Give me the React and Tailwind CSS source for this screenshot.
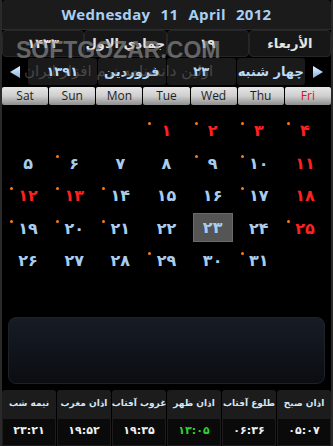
const days = [
  [null, null, null, { n: "۱", red: true, dot: true }, { n: "۲", red: true, dot: true }, { n: "۳", red: true, dot: true }, { n: "۴", red: true, dot: true }],
  [{ n: "۵" }, { n: "۶", dot: true }, { n: "۷" }, { n: "۸" }, { n: "۹", dot: true }, { n: "۱۰", dot: true }, { n: "۱۱", red: true }],
  [{ n: "۱۲", red: true, dot: true }, { n: "۱۳", red: true, dot: true }, { n: "۱۴", dot: true }, { n: "۱۵" }, { n: "۱۶" }, { n: "۱۷", dot: true }, { n: "۱۸", red: true }],
  [{ n: "۱۹", dot: true }, { n: "۲۰", dot: true }, { n: "۲۱", dot: true }, { n: "۲۲" }, { n: "۲۳", sel: true }, { n: "۲۴" }, { n: "۲۵", red: true, dot: true }],
  [{ n: "۲۶" }, { n: "۲۷" }, { n: "۲۸" }, { n: "۲۹", dot: true }, { n: "۳۰" }, { n: "۳۱", dot: true }, null],
];

const weekdays = ["Sat", "Sun", "Mon", "Tue", "Wed", "Thu", "Fri"];

const prayers = [
  { label: "نیمه شب", time: "۲۳:۲۱" },
  { label: "اذان مغرب", time: "۱۹:۵۲" },
  { label: "غروب آفتاب", time: "۱۹:۳۵" },
  { label: "اذان ظهر", time: "۱۳:۰۵", green: true },
  { label: "طلوع آفتاب", time: "۰۶:۳۶" },
  { label: "اذان صبح", time: "۰۵:۰۷" },
];

const fa = { fontFamily: '"DejaVu Sans", sans-serif' };

function Arrow({ dir }) {
  return (
    <svg width="12" height="14" viewBox="0 0 12 14">
      <defs>
        <linearGradient id={"ag" + dir} x1="0" y1="0" x2="0" y2="1">
          <stop offset="0" stopColor="#e8f4ff" />
          <stop offset="1" stopColor="#7fb2e0" />
        </linearGradient>
      </defs>
      {dir === "left" ? (
        <polygon points="11,1 11,13 1,7" fill={"url(#ag" + dir + ")"} />
      ) : (
        <polygon points="1,1 1,13 11,7" fill={"url(#ag" + dir + ")"} />
      )}
    </svg>
  );
}

export default function App() {
  return (
    <div className="relative w-[333px] h-[446px] overflow-hidden bg-black border-x-2 border-[#2a2a2a]">
      {/* Gregorian date */}
      <div
        className="h-[30px] flex items-center justify-center bg-[#1b1b1b] border-b border-[#2c2c2c] rounded-t-sm text-[15px] font-bold text-[#a9d0f3] tracking-[0.3px]"
        style={{ fontFamily: '"Open Sans", sans-serif', wordSpacing: "6px" }}
      >
        Wednesday 11 April 2012
      </div>

      {/* Hijri row */}
      <div className="h-[27px] grid grid-cols-4 text-[13px] text-[#e4e4e4] font-bold" style={fa}>
        {["۱۴۳۳", "جمادي الاول", "۱۹", "الأربعاء"].map((t, i) => (
          <div key={i} className="flex items-center justify-center bg-[#171717] border border-[#262626] rounded-sm">
            {t}
          </div>
        ))}
      </div>

      {/* Persian row */}
      <div className="h-[29px] flex items-center">
        <div className="w-[26px] flex justify-center">
          <Arrow dir="left" />
        </div>
        <div className="flex-1 grid grid-cols-4 gap-[1px] h-[27px] text-[13px] font-bold text-[#b9dbf6]" style={fa}>
          {["۱۳۹۱", "فروردین", "۲۳", "چهار شنبه"].map((t, i) => (
            <div key={i} className="flex items-center justify-center bg-[#1a1a1a] rounded-[3px]">
              {t}
            </div>
          ))}
        </div>
        <div className="w-[26px] flex justify-center">
          <Arrow dir="right" />
        </div>
      </div>

      {/* Weekdays */}
      <div className="mt-[1px] h-[18px] grid grid-cols-7 gap-[1px] text-[12px]" style={{ fontFamily: '"Open Sans", sans-serif' }}>
        {weekdays.map((d) => (
          <div
            key={d}
            className={
              "flex items-center justify-center rounded-[2px] bg-gradient-to-b from-[#e6e6e6] via-[#cfcfcf] to-[#8e8e8e] " +
              (d === "Fri" ? "text-[#e01010]" : "text-[#1e1e1e]")
            }
          >
            {d}
          </div>
        ))}
      </div>

      {/* Month grid */}
      <div className="mt-[10px] px-[3px] grid grid-cols-7" style={fa}>
        {days.flat().map((c, i) => (
          <div key={i} className="relative h-[32.5px] flex items-center justify-center">
            {c && c.dot && <span className="absolute left-[5px] top-[7px] w-[3px] h-[3px] rounded-full bg-[#ff7a10]" />}
            {c && (
              <div
                className={
                  "flex items-center justify-center text-[16px] font-bold " +
                  (c.sel ? "w-[40px] h-[29px] bg-[#555] border border-[#6a6a6a] mt-[-2px] " : "") +
                  (c.red ? "text-[#ff2020]" : "text-[#a8cdee]")
                }
              >
                {c.n}
              </div>
            )}
          </div>
        ))}
      </div>

      {/* Empty panel */}
      <div className="mt-[39px] mx-[6px] h-[67px] rounded-lg bg-gradient-to-b from-[#171c25] to-[#0b0d11] border border-[#1d2129]" />

      {/* Prayer times */}
      <div className="mt-[6px] grid grid-cols-6 gap-x-[1px]" style={fa}>
        {prayers.map((p) => (
          <div key={p.label} className="flex flex-col">
            <div className="h-[28px] flex items-center justify-center bg-[#1c1c1c] rounded-t-[3px] text-[9px] font-bold text-[#d4e6f6] whitespace-nowrap">
              {p.label}
            </div>
            <div
              dir="ltr"
              className={
                "h-[28px] flex items-center justify-center bg-[#0a0a0a] border border-[#1c1c1c] text-[11px] font-bold " +
                (p.green ? "text-[#2fd12f]" : "text-[#f0f0f0]")
              }
            >
              {p.time}
            </div>
          </div>
        ))}
      </div>

      {/* Watermark */}
      <div
        className="absolute left-[14px] top-[33px] text-[23px] font-extrabold text-[#9a9a9a] opacity-60 pointer-events-none"
        style={{ fontFamily: '"Liberation Sans", sans-serif' }}
      >
        SOFTGOZAR.COM
      </div>
      <div className="absolute left-[22px] top-[60px] text-[15px] text-[#8a8a8a] opacity-40 pointer-events-none" style={fa} dir="rtl">
        اولین دانشنامه نرم افزار ایران
      </div>
    </div>
  );
}
